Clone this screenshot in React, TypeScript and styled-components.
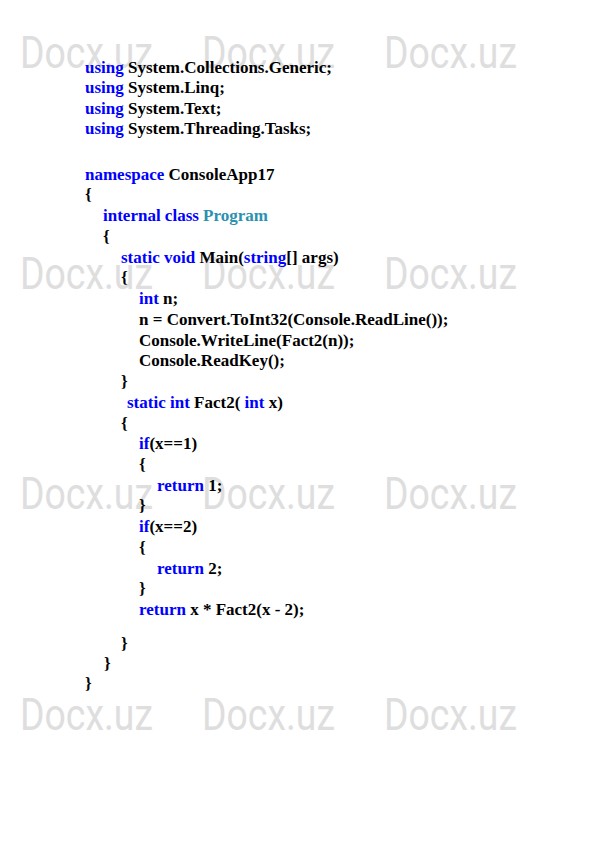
import React from "react";
import styled, { createGlobalStyle } from "styled-components";

const Global = createGlobalStyle`
  html, body { margin: 0; padding: 0; background: #ffffff; }
  #root { width: 595px; }
`;

const Page = styled.div`
  position: relative;
  width: 595px;
  height: 842px;
  overflow: hidden;
  background: #ffffff;
`;

const Watermarks = styled.div`
  position: absolute;
  inset: 0;
  display: grid;
  grid-template-columns: repeat(3, 182px);
  grid-auto-rows: 220.5px;
  padding: 31px 0 0 20px;
  pointer-events: none;
  z-index: 0;
`;

const Mark = styled.span`
  font-family: Roboto, "Liberation Sans", sans-serif;
  font-weight: 400;
  font-size: 44px;
  line-height: 44px;
  height: 44px;
  color: #dedede;
  white-space: nowrap;
  transform: scaleX(0.85);
  transform-origin: left top;
`;

const Code = styled.div`
  position: relative;
  z-index: 1;
  padding: 58px 0 0 85px;
  font-family: "Liberation Serif", "Times New Roman", serif;
  font-weight: bold;
  font-size: 17px;
  color: #000000;
`;

const Block = styled.div<{ $lh: number; $gap?: number }>`
  line-height: ${(p) => p.$lh}px;
  margin-top: ${(p) => p.$gap ?? 0}px;
`;

const Line = styled.div<{ $level?: number; $shift?: number }>`
  padding-left: ${(p) => (p.$level ?? 0) * 18 + (p.$shift ?? 0)}px;
  white-space: pre;
`;

const Kw = styled.span`
  color: #0000ff;
`;

const TypeName = styled.span`
  color: #2b91af;
`;

export default function App() {
  return (
    <Page>
      <Global />
      <Watermarks>
        {Array.from({ length: 12 }).map((_, i) => (
          <Mark key={i}>Docx.uz</Mark>
        ))}
      </Watermarks>
      <Code>
        <Block $lh={20.3}>
          <Line><Kw>using</Kw> System.Collections.Generic;</Line>
          <Line><Kw>using</Kw> System.Linq;</Line>
          <Line><Kw>using</Kw> System.Text;</Line>
          <Line><Kw>using</Kw> System.Threading.Tasks;</Line>
        </Block>
        <Block $lh={20.73} $gap={25.5}>
          <Line><Kw>namespace</Kw> ConsoleApp17</Line>
          <Line>{"{"}</Line>
          <Line $level={1}><Kw>internal</Kw> <Kw>class</Kw> <TypeName>Program</TypeName></Line>
          <Line $level={1}>{"{"}</Line>
          <Line $level={2}><Kw>static</Kw> <Kw>void</Kw> Main(<Kw>string</Kw>[] args)</Line>
          <Line $level={2}>{"{"}</Line>
          <Line $level={3}><Kw>int</Kw> n;</Line>
          <Line $level={3}>n = Convert.ToInt32(Console.ReadLine());</Line>
          <Line $level={3}>Console.WriteLine(Fact2(n));</Line>
          <Line $level={3}>Console.ReadKey();</Line>
          <Line $level={2}>{"}"}</Line>
          <Line $level={2} $shift={6}><Kw>static</Kw> <Kw>int</Kw> Fact2( <Kw>int</Kw> x)</Line>
          <Line $level={2}>{"{"}</Line>
          <Line $level={3}><Kw>if</Kw>(x==1)</Line>
          <Line $level={3}>{"{"}</Line>
          <Line $level={4}><Kw>return</Kw> 1;</Line>
          <Line $level={3}>{"}"}</Line>
          <Line $level={3}><Kw>if</Kw>(x==2)</Line>
          <Line $level={3}>{"{"}</Line>
          <Line $level={4}><Kw>return</Kw> 2;</Line>
          <Line $level={3}>{"}"}</Line>
          <Line $level={3}><Kw>return</Kw> x * Fact2(x - 2);</Line>
        </Block>
        <Block $lh={19.7} $gap={13.3}>
          <Line $level={2}>{"}"}</Line>
          <Line $level={1} $shift={1}>{"}"}</Line>
          <Line>{"}"}</Line>
        </Block>
      </Code>
    </Page>
  );
}
